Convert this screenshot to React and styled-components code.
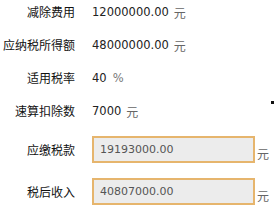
import React from 'react';
import styled, { createGlobalStyle } from 'styled-components'

const GlobalStyle = createGlobalStyle`
  html, body {
    margin: 0;
    padding: 0;
    background: #ffffff;
  }
`

const Page = styled.div`
  position: relative;
  width: 275px;
  height: 214px;
  overflow: hidden;
  background: #fff;
  font-family: "DejaVu Sans", "Noto Sans CJK SC", sans-serif;
`

const Form = styled.div`
  display: flex;
  flex-direction: column;
  gap: 9px;
`

const Row = styled.div`
  display: flex;
  align-items: center;
  height: ${props => props.boxed ? "27px" : "24px"};
  margin-top: ${props => props.offset || 0}px;
`

const Label = styled.div`
  width: 75px;
  flex: none;
  text-align: right;
  font-family: "Noto Sans CJK SC", sans-serif;
  font-size: 12px;
  color: #111;
  margin-right: 17px;
  line-height: 1;
`

const Value = styled.span`
  font-size: 11.5px;
  color: #222;
`

const Unit = styled.span`
  font-family: "Noto Sans CJK SC", sans-serif;
  font-size: 12px;
  color: #666;
  margin-left: ${props => props.gap || 5}px;
  align-self: ${props => props.low ? "flex-end" : "auto"};
  padding-bottom: ${props => props.low ? "1px" : "0"};
`

const Percent = styled.span`
  font-size: 11.5px;
  color: #777;
  margin-left: 6px;
`

const ReadBox = styled.div`
  box-sizing: border-box;
  width: 163px;
  height: 27px;
  border: 2px solid #e6b56d;
  background: #ececec;
  display: flex;
  align-items: center;
  padding-left: 6px;
  font-size: 11px;
  color: #555;
`

const Dot = styled.div`
  position: absolute;
  left: 271px;
  top: 101px;
  width: 3px;
  height: 3px;
  background: #111;
`

export default function App() {
  return (
    <Page>
      <GlobalStyle />
      <Form>
        <Row>
          <Label>减除费用</Label>
          <Value>12000000.00</Value>
          <Unit>元</Unit>
        </Row>
        <Row>
          <Label>应纳税所得额</Label>
          <Value>48000000.00</Value>
          <Unit>元</Unit>
        </Row>
        <Row>
          <Label>适用税率</Label>
          <Value>40</Value>
          <Percent>%</Percent>
        </Row>
        <Row>
          <Label>速算扣除数</Label>
          <Value>7000</Value>
          <Unit>元</Unit>
        </Row>
        <Row boxed offset={4}>
          <Label>应缴税款</Label>
          <ReadBox>19193000.00</ReadBox>
          <Unit gap={2} low>元</Unit>
        </Row>
        <Row boxed offset={6}>
          <Label>税后收入</Label>
          <ReadBox>40807000.00</ReadBox>
          <Unit gap={2} low>元</Unit>
        </Row>
      </Form>
      <Dot />
    </Page>
  );
}
